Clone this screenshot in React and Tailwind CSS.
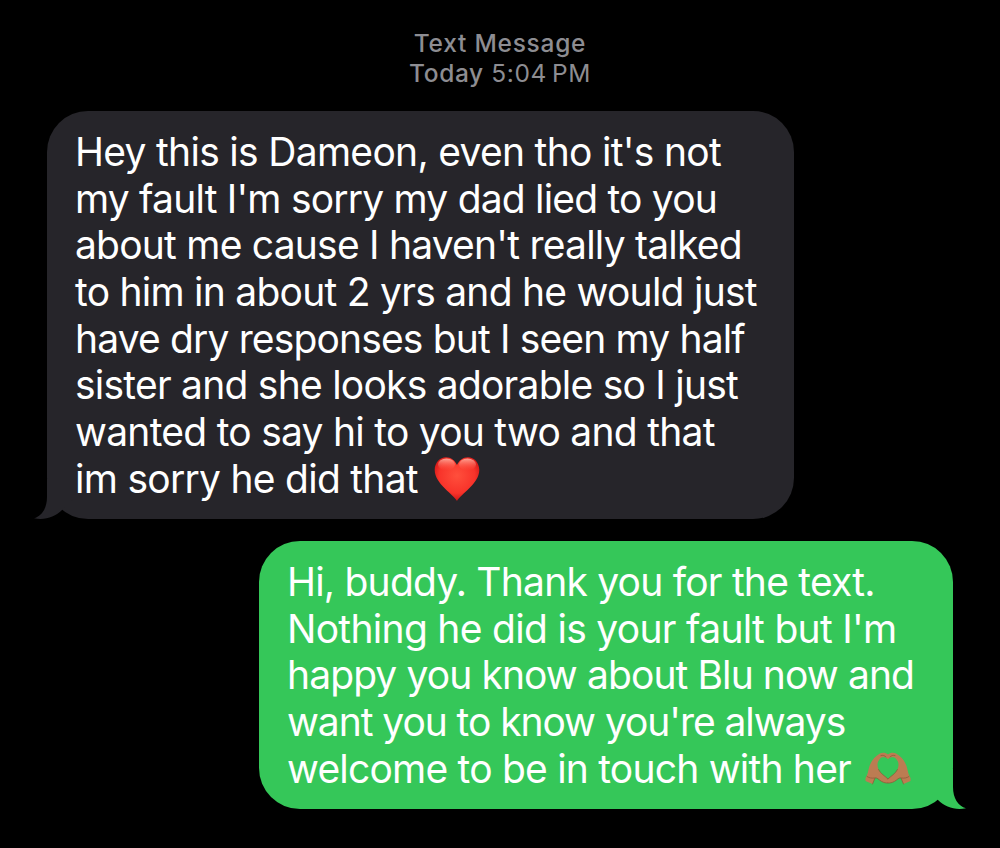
import clsx from "clsx";

const received = [
  { text: "Hey this is Dameon, even tho it's not", tracking: "tracking-[-0.7px]" },
  { text: "my fault I'm sorry my dad lied to you", tracking: "tracking-[-0.8px]" },
  { text: "about me cause I haven't really talked", tracking: "tracking-[-0.78px]" },
  { text: "to him in about 2 yrs and he would just", tracking: "tracking-[-0.75px]" },
  { text: "have dry responses but I seen my half", tracking: "tracking-[-0.85px]" },
  { text: "sister and she looks adorable so I just", tracking: "tracking-[-0.76px]" },
  { text: "wanted to say hi to you two and that", tracking: "tracking-[-0.74px]" },
  { text: "im sorry he did that", tracking: "tracking-[-0.73px]", icon: "heart" }
];

const sent = [
  { text: "Hi, buddy. Thank you for the text.", tracking: "tracking-[-0.78px]" },
  { text: "Nothing he did is your fault but I'm", tracking: "tracking-[-0.7px]" },
  { text: "happy you know about Blu now and", tracking: "tracking-[-0.9px]" },
  { text: "want you to know you're always", tracking: "tracking-[-1.06px]" },
  { text: "welcome to be in touch with her", tracking: "tracking-[-0.79px]", icon: "hands" }
];

const Heart = () => (
  <svg viewBox="0 0 46 46" className="ml-[16px] h-[46px] w-[46px] shrink-0">
    <defs>
      <radialGradient id="heartBody" cx="0.5" cy="0.42" r="0.62">
        <stop offset="0" stopColor="#ff4f3c" />
        <stop offset="0.65" stopColor="#f8332a" />
        <stop offset="1" stopColor="#c20d10" />
      </radialGradient>
      <linearGradient id="heartShine" x1="0" y1="0" x2="0" y2="1">
        <stop offset="0" stopColor="#ffb3a3" stopOpacity="0.9" />
        <stop offset="1" stopColor="#ff5a48" stopOpacity="0" />
      </linearGradient>
    </defs>
    <path
      d="M23 45C20 38.500 0.700 28 0.700 14C0.700 6.500 6 1.200 12 1.200C17 1.200 21 4.500 23 9C25 4.500 29 1.200 34 1.200C40 1.200 45.300 6.500 45.300 14C45.300 28 26 38.500 23 45Z"
      fill="url(#heartBody)"
    />
    <ellipse cx="12.500" cy="8.500" rx="8.500" ry="6" fill="url(#heartShine)" />
    <ellipse cx="33.500" cy="8.500" rx="8.500" ry="6" fill="url(#heartShine)" />
  </svg>
);

const Hand = () => (
  <>
    <path
      d="M0.500 26C3 22.500 3 18.500 4.500 14C6.500 8.500 10 4.500 14.500 1.800C17 0.200 20.500 0.200 23 2.500V7.300C20.500 4.800 17 4.800 15 6.800C12.200 9.500 11.800 13.500 13.500 17.500C15.500 21.800 20 24 23 27V31C20.500 31.500 17 30 14.500 28C12.500 26.300 11 25.500 10 26L7.500 32L0.500 29Z"
      fill="#bc7c52"
    />
    <path
      d="M13.500 17.500C15.500 21.800 20 24 23 27M23 31C20.500 31.500 17 30 14.500 28C12.500 26.300 11 25.500 10 26L7.500 32M16 3.500C18 3 19.500 3.500 21 5M2 24.500C4 26 7 26.500 9.500 26"
      fill="none"
      stroke="#8c5635"
      strokeWidth="0.7"
      strokeLinecap="round"
    />
  </>
);

const HeartHands = () => (
  <svg viewBox="0 0 46 33" className="relative -top-px ml-[14px] h-[33px] w-[46px] shrink-0">
    <Hand />
    <g transform="translate(46 0) scale(-1 1)">
      <Hand />
    </g>
  </svg>
);

const Tail = ({ mine }) => (
  <svg
    viewBox="0 0 52 40"
    className={clsx(
      "absolute bottom-0 h-[40px] w-[52px]",
      mine ? "-right-[13px] -scale-x-100 text-[#35c759]" : "-left-[13px] text-[#26252a]"
    )}
  >
    <path d="M13 0V18C13 29 8 37 0 39.300C11 41.500 21 38 28 31L50 10V0Z" fill="currentColor" />
  </svg>
);

const Bubble = ({ lines, mine }) => (
  <div
    className={clsx(
      "relative rounded-[41px] pl-[28px] pt-[18px]",
      mine ? "ml-[259px] mt-[22px] h-[268px] w-[694px] bg-[#35c759]" : "ml-[47px] h-[408px] w-[747px] bg-[#26252a]"
    )}
  >
    <Tail mine={mine} />
    {lines.map((line) => (
      <div key={line.text} className="relative flex h-[46.7px] items-center whitespace-nowrap text-[39px] leading-[46.7px]">
        <span className={line.tracking}>{line.text}</span>
        {line.icon === "heart" && <Heart />}
        {line.icon === "hands" && <HeartHands />}
      </div>
    ))}
  </div>
);

const App = () => {
  return (
    <div className="h-[848px] w-[1000px] overflow-hidden bg-black font-['Inter',sans-serif] text-white">
      <div className="flex h-[111px] flex-col items-center pt-[28px] text-[24.5px] leading-[30px] text-[#8d8d92]">
        <div className="font-medium tracking-[0.75px]">Text Message</div>
        <div className="tracking-[0.6px]">
          <span className="font-medium">Today</span> 5:04<span className="ml-[5px]">PM</span>
        </div>
      </div>
      <Bubble lines={received} />
      <Bubble lines={sent} mine />
    </div>
  );
};

export default App;
